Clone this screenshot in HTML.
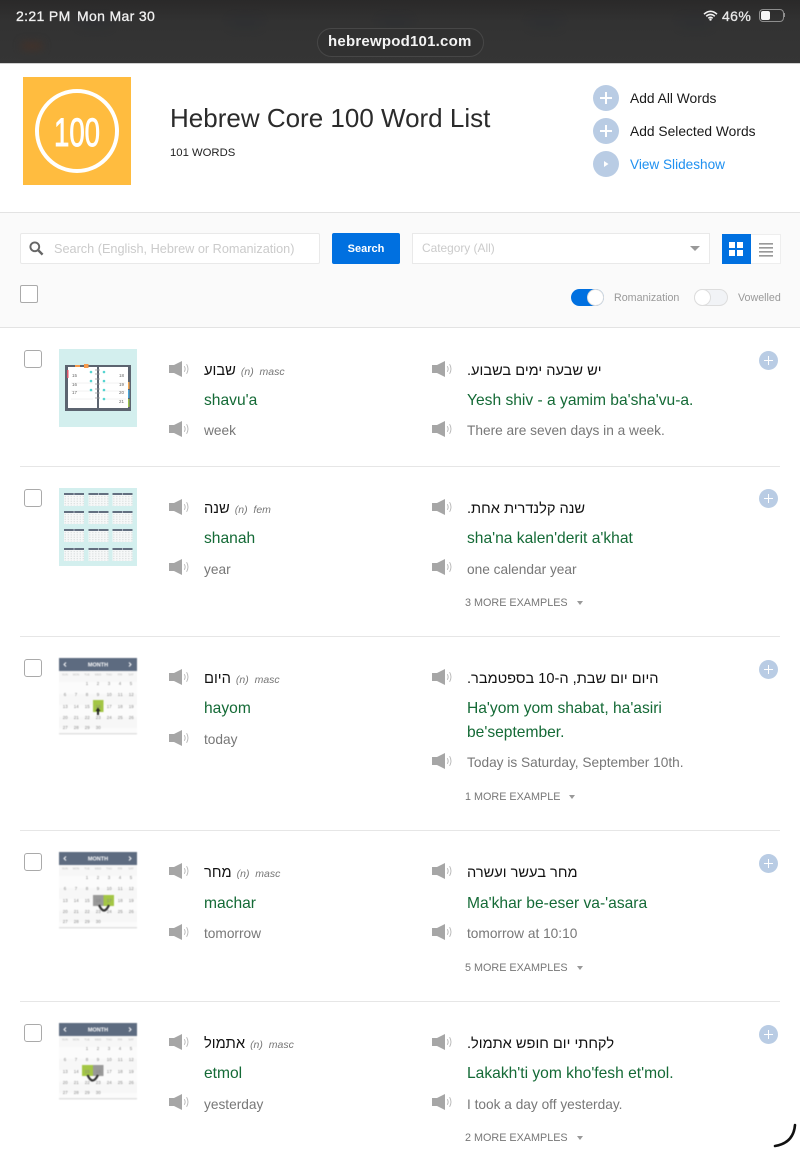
<!DOCTYPE html>
<html lang="en"><head><meta charset="utf-8"><title>Hebrew Core 100 Word List</title>
<style>
html,body{margin:0;padding:0;background:#fff}
body{width:800px;height:1151px;position:relative;overflow:hidden;font-family:"Liberation Sans","Noto Sans CJK JP",sans-serif}
.t{position:absolute;white-space:nowrap;line-height:20px}
.a{position:absolute}
svg{position:absolute;overflow:visible}
.he{color:#111;font-size:14.6px}
.hw{color:#111;font-size:14.7px}
.g{color:#146a36;font-size:15.6px}
.gw{color:#146a36;font-size:15.6px}
.e{color:#777;font-size:13.7px}
.m{color:#777;font-size:10.8px}
.pos{color:#777;font-size:10.5px;font-style:italic;margin-left:5px}
.cb{position:absolute;left:24px;width:15.5px;height:15.5px;border:1.5px solid #aaa;border-radius:3px;background:#fff}
.pl{position:absolute;left:759px;width:19px;height:19px;border-radius:50%;background:#b9cce4}
.pl:before{content:"";position:absolute;left:5px;top:9px;width:9px;height:1.4px;background:#fff}
.pl:after{content:"";position:absolute;left:8.8px;top:5.2px;width:1.4px;height:9px;background:#fff}
.tri{position:absolute;width:0;height:0;border-left:3.5px solid transparent;border-right:3.5px solid transparent;border-top:4px solid #999}
.hr{position:absolute;left:20px;width:760px;height:1px;background:#e6e6e6}
.sp{position:absolute;width:21px;height:17px}
.big{position:absolute;width:26px;height:26px;left:593px;border-radius:50%;background:#b9cce4}
.big.p:before{content:"";position:absolute;left:7px;top:12.2px;width:12px;height:1.6px;background:#fff}
.big.p:after{content:"";position:absolute;left:12.2px;top:7px;width:1.6px;height:12px;background:#fff}
</style></head><body>

<svg width="0" height="0" style="position:absolute"><defs>
<symbol id="spk" viewBox="0 0 21 17"><path d="M0 4H5L13 0V16L5 12H0Z" fill="#a6a6a6"/><path d="M15.3 5.2Q17 8 15.3 10.8M17.6 3.2Q20.4 8 17.6 12.8" fill="none" stroke="#b5b5b5" stroke-width=".9"/></symbol>
<pattern id="dots" width="3" height="2.4" patternUnits="userSpaceOnUse"><rect width="3" height="2.4" fill="#f6f8f8"/><rect x=".6" y=".6" width="1.4" height="1" fill="#d8dcdd"/></pattern>
<g id="mini"><rect width="20" height="13" fill="url(#dots)"/><rect width="20" height="2" fill="#636f80"/><rect x="9.5" width="1" height="2" fill="#a9b3bf"/></g>
</defs></svg>

<!-- top bar -->
<div class="a" style="left:0;top:0;width:800px;height:63px;background:linear-gradient(#2a2929,#323232 35%,#353535)"></div>
<div class="a" style="left:0;top:18px;width:800px;height:10px;filter:blur(5px);opacity:.3;background:repeating-linear-gradient(90deg,transparent 0 80px,#262c33 80px 110px,transparent 110px 150px)"></div>
<div class="a" style="left:22px;top:42px;width:20px;height:8px;background:#42322a;filter:blur(4px)"></div>
<div class="a" style="left:0;top:63px;width:800px;height:1px;background:#cfcfcf"></div>
<div class="t" style="left:16px;top:6px;color:#f1f1f1;font-size:14px;-webkit-text-stroke:.3px #f1f1f1;letter-spacing:.35px">2:21 PM</div>
<div class="t" style="left:77px;top:6px;color:#f1f1f1;font-size:14px;-webkit-text-stroke:.3px #f1f1f1;letter-spacing:.35px">Mon Mar 30</div>
<div class="a" style="left:317px;top:28px;width:165px;height:27px;border:1px solid #474747;border-radius:15px;background:#313131"></div>
<div class="t" style="left:328px;top:32px;color:#f4f4f4;font-size:15px;font-weight:700;letter-spacing:.22px">hebrewpod101.com</div>
<svg style="left:703px;top:10px" width="15" height="11" viewBox="0 0 15 11"><path d="M1 4.2Q7.5-1.6 14 4.2M3.2 6.3Q7.5 2.6 11.8 6.3M5.3 8.3Q7.5 6.4 9.7 8.3" fill="none" stroke="#f1f1f1" stroke-width="1.6"/><circle cx="7.5" cy="9.6" r="1.2" fill="#f1f1f1"/></svg>
<div class="t" style="left:722px;top:6px;color:#e8e8e8;font-size:14px;-webkit-text-stroke:.3px #e8e8e8;letter-spacing:.4px">46%</div>
<div class="a" style="left:759px;top:9px;width:23px;height:11px;border:1px solid #8e8e8e;border-radius:4px"></div>
<div class="a" style="left:761px;top:11px;width:9px;height:9px;background:#f5f5f5;border-radius:2px"></div>
<div class="a" style="left:784px;top:13px;width:1px;height:4px;background:#8e8e8e"></div>

<!-- header -->
<svg style="left:23px;top:77px" width="108" height="108" viewBox="0 0 108 108"><rect width="108" height="108" fill="#ffbc3f"/><circle cx="54" cy="54" r="40" fill="none" stroke="#fff" stroke-width="4"/><text x="31" y="69" font-family="Liberation Sans, sans-serif" font-size="40" fill="#fff" stroke="#fff" stroke-width=".9" textLength="46" lengthAdjust="spacingAndGlyphs">100</text></svg>
<div class="t" style="left:170px;top:103px;font-size:26px;line-height:30px;color:#2b2b2b">Hebrew Core 100 Word List</div>
<div class="t" style="left:170px;top:143px;font-size:11.3px;color:#222">101 WORDS</div>
<div class="big p" style="top:85px"></div>
<div class="big p" style="top:118px"></div>
<div class="big" style="top:151px"></div>
<svg style="left:604px;top:161px" width="5" height="6"><path d="M0 0L4.5 3L0 6Z" fill="#fff"/></svg>
<div class="t" style="left:630px;top:89px;font-size:13.8px;color:#1a1a1a">Add All Words</div>
<div class="t" style="left:630px;top:122px;font-size:13.8px;color:#1a1a1a">Add Selected Words</div>
<div class="t" style="left:630px;top:155px;font-size:13.6px;color:#1e90f0">View Slideshow</div>

<!-- toolbar -->
<div class="a" style="left:0;top:212px;width:800px;height:114px;background:#fafafa;border-top:1px solid #e3e3e3;border-bottom:1px solid #e3e3e3"></div>
<div class="a" style="left:20px;top:233px;width:298px;height:29px;background:#fff;border:1px solid #e9e9e9;border-radius:2px"></div>
<svg style="left:29px;top:241px" width="15" height="15" viewBox="0 0 15 15"><circle cx="5.8" cy="5.8" r="4.4" fill="none" stroke="#666" stroke-width="1.9"/><path d="M9 9L13.6 13.6" stroke="#666" stroke-width="2.4"/></svg>
<div class="t" style="left:54px;top:239px;font-size:12.7px;color:#cbcbcb">Search (English, Hebrew or Romanization)</div>
<div class="a" style="left:332px;top:233px;width:68px;height:31px;background:#0070e0;border-radius:2px;color:#fff;font-size:11px;font-weight:700;line-height:32px;text-align:center">Search</div>
<div class="a" style="left:412px;top:233px;width:296px;height:29px;background:#fff;border:1px solid #e9e9e9"></div>
<div class="t" style="left:422px;top:238px;font-size:11.9px;color:#cbcbcb">Category (All)</div>
<div class="tri" style="left:690px;top:246px;border-left-width:5px;border-right-width:5px;border-top-width:5px;border-top-color:#999"></div>
<div class="a" style="left:722px;top:234px;width:29px;height:30px;background:#0070e0"></div>
<div class="a" style="left:751px;top:234px;width:29px;height:28px;background:#fff;border:1px solid #eee;border-left:0"></div>
<svg style="left:729px;top:242px" width="15" height="14"><path d="M0 0h6v6H0zM8 0h6v6H8zM0 8h6v6H0zM8 8h6v6H8z" fill="#fff"/></svg>
<svg style="left:759px;top:243px" width="14" height="14"><path d="M0 0h14v1.6H0zM0 4h14v1.6H0zM0 8h14v1.6H0zM0 12h14v1.6H0z" fill="#999"/></svg>
<div class="a" style="left:20px;top:285px;width:16px;height:16px;border:1.5px solid #aaa;border-radius:2px;background:#fff"></div>
<div class="a" style="left:571px;top:289px;width:33px;height:17px;border-radius:9px;background:#0070e0"></div>
<div class="a" style="left:587px;top:289px;width:15px;height:15px;border-radius:50%;background:#fff;border:1px solid #ddd"></div>
<div class="t" style="left:614px;top:288px;font-size:10.7px;color:#999">Romanization</div>
<div class="a" style="left:694px;top:289px;width:32px;height:15px;border-radius:9px;background:#f1f3f6;border:1px solid #ddd"></div>
<div class="a" style="left:694px;top:289px;width:15px;height:15px;border-radius:50%;background:#fff;border:1px solid #ddd"></div>
<div class="t" style="left:738px;top:288px;font-size:10.7px;color:#999">Vowelled</div>

<!-- separators -->
<div class="hr" style="top:466px"></div>
<div class="hr" style="top:636px"></div>
<div class="hr" style="top:830px"></div>
<div class="hr" style="top:1001px"></div>

<!-- row 1 -->
<div class="cb" style="top:350px"></div>
<svg style="left:59px;top:349px;filter:blur(.3px)" width="78" height="78" viewBox="0 0 78 78">
<rect width="78" height="78" fill="#d3efee"/>
<rect x="6" y="16" width="66" height="46" fill="#5c6470"/><rect x="9" y="18" width="29" height="41" fill="#fff"/><rect x="40" y="18" width="29" height="41" fill="#fff"/>
<rect x="16" y="16" width="5" height="2" fill="#f79a4b"/><rect x="25" y="15" width="4.500" height="4" fill="#f79a4b"/>
<rect x="8" y="21" width="1.5" height="8" fill="#e0556a"/><rect x="69" y="33" width="1.5" height="7" fill="#f3a64f"/><rect x="69" y="41" width="1.5" height="8" fill="#4aa6d8"/><rect x="69" y="50" width="1.5" height="8" fill="#9bc24a"/>
<path d="M36 21h5M36 25h5M36 30h5M36 35h5M36 40h5M36 44h5M36 49h5" stroke="#999" stroke-width=".7"/>
<path d="M12 34h22M12 42h22M12 50h22M43 34h24M43 42h24M43 50h24" stroke="#e6e6e6" stroke-width=".5"/>
<g fill="#55d4d0"><circle cx="32" cy="23" r="1.3"/><circle cx="32" cy="32" r="1.3"/><circle cx="32" cy="41" r="1.3"/><circle cx="45" cy="23" r="1.3"/><circle cx="45" cy="32" r="1.3"/><circle cx="45" cy="41" r="1.3"/><circle cx="45" cy="50" r="1.3"/></g>
<g font-family="Liberation Sans,sans-serif" font-size="4.5" fill="#666"><text x="13" y="28">15</text><text x="13" y="37">16</text><text x="13" y="45">17</text><text x="60" y="28">18</text><text x="60" y="37">19</text><text x="60" y="45">20</text><text x="60" y="54">21</text></g>
</svg>
<svg class="sp" style="left:169px;top:361px"><use href="#spk"/></svg>
<div class="t" style="left:204px;top:361px"><span class="hw" dir="rtl">שבוע</span><span class="pos">(n)&nbsp; masc</span></div>
<div class="t g" style="left:204px;top:391px">shavu'a</div>
<svg class="sp" style="left:169px;top:421px"><use href="#spk"/></svg>
<div class="t e" style="left:204px;top:421px">week</div>
<svg class="sp" style="left:432px;top:361px"><use href="#spk"/></svg>
<div class="t he" dir="rtl" style="left:467px;top:361px">יש שבעה ימים בשבוע.</div>
<div class="t gw" style="left:467px;top:391px">Yesh shiv - a yamim ba'sha'vu-a.</div>
<svg class="sp" style="left:432px;top:421px"><use href="#spk"/></svg>
<div class="t e" style="left:467px;top:421px">There are seven days in a week.</div>
<div class="pl" style="top:351px"></div>

<!-- row 2 -->
<div class="cb" style="top:489px"></div>
<svg style="left:59px;top:488px;filter:blur(.3px)" width="78" height="78" viewBox="0 0 78 78">
<rect width="78" height="78" fill="#d3efee"/>
<use href="#mini" x="5" y="5"/><use href="#mini" x="29.5" y="5"/><use href="#mini" x="53.5" y="5"/>
<use href="#mini" x="5" y="23"/><use href="#mini" x="29.5" y="23"/><use href="#mini" x="53.5" y="23"/>
<use href="#mini" x="5" y="41"/><use href="#mini" x="29.5" y="41"/><use href="#mini" x="53.5" y="41"/>
<use href="#mini" x="5" y="60"/><use href="#mini" x="29.5" y="60"/><use href="#mini" x="53.5" y="60"/>
</svg>
<svg class="sp" style="left:169px;top:499px"><use href="#spk"/></svg>
<div class="t" style="left:204px;top:499px"><span class="hw" dir="rtl">שנה</span><span class="pos">(n)&nbsp; fem</span></div>
<div class="t g" style="left:204px;top:529px">shanah</div>
<svg class="sp" style="left:169px;top:559px"><use href="#spk"/></svg>
<div class="t e" style="left:204px;top:560px">year</div>
<svg class="sp" style="left:432px;top:499px"><use href="#spk"/></svg>
<div class="t he" dir="rtl" style="left:467px;top:499px">שנה קלנדרית אחת.</div>
<div class="t gw" style="left:467px;top:529px">sha'na kalen'derit a'khat</div>
<svg class="sp" style="left:432px;top:559px"><use href="#spk"/></svg>
<div class="t e" style="left:467px;top:560px">one calendar year</div>
<div class="t m" style="left:465px;top:593px">3 MORE EXAMPLES</div><div class="tri" style="left:577px;top:601px"></div>
<div class="pl" style="top:489px"></div>

<!-- row 3 -->
<div class="cb" style="top:659px"></div>
<svg style="left:59px;top:658px;filter:blur(.4px)" width="78" height="78" viewBox="0 0 78 78" font-family="Liberation Sans,sans-serif">
<rect width="78" height="76" fill="#fbfbfb"/><rect y="13" width="78" height="11" fill="#f7f7f7"/><rect y="36" width="78" height="11" fill="#f7f7f7"/><rect y="59" width="78" height="11" fill="#f7f7f7"/>
<rect width="78" height="13" fill="#5d6b80"/><rect y="75" width="78" height="1.5" fill="#e2e2e2"/>
<text x="39" y="8.500" font-size="5.500" font-weight="700" fill="#fff" text-anchor="middle">MONTH</text>
<path d="M7 4.500L5 6.500L7 8.500M70 4.500L72 6.500L70 8.500" fill="none" stroke="#fff" stroke-width="1"/>
<g font-size="2.800" fill="#bbb" text-anchor="middle"><text x="6" y="17.500">SUN</text><text x="17" y="17.500">MON</text><text x="28" y="17.500">TUE</text><text x="39" y="17.500">WED</text><text x="50" y="17.500">THU</text><text x="61" y="17.500">FRI</text><text x="72" y="17.500">SAT</text></g>
<rect x="34" y="42" width="10.500" height="12" fill="#a3c644"/>
<g font-size="4.400" fill="#888" text-anchor="middle"><text x="28 39 50 61 72" y="27">12345</text><text x="6 17 28 39 49 51.500 60 62.500 71 73.500" y="38">6789101112</text><text x="5 7.500 16 18.500 27 29.500 38 40.500 49 51.500 60 62.500 71 73.500" y="50">13141516171819</text><text x="5 7.500 16 18.500 27 29.500 38 40.500 49 51.500 60 62.500 71 73.500" y="61">20212223242526</text><text x="5 7.500 16 18.500 27 29.500 38 40.500" y="71">27282930</text></g>
<path d="M39 52V57" stroke="#222" stroke-width="2"/><path d="M36.500 53L39 49.500L41.500 53Z" fill="#222"/>
</svg>
<svg class="sp" style="left:169px;top:669px"><use href="#spk"/></svg>
<div class="t" style="left:204px;top:669px"><span class="hw" dir="rtl">היום</span><span class="pos">(n)&nbsp; masc</span></div>
<div class="t g" style="left:204px;top:699px">hayom</div>
<svg class="sp" style="left:169px;top:730px"><use href="#spk"/></svg>
<div class="t e" style="left:204px;top:730px">today</div>
<svg class="sp" style="left:432px;top:669px"><use href="#spk"/></svg>
<div class="t he" dir="rtl" style="left:467px;top:669px">היום יום שבת, ה-10 בספטמבר.</div>
<div class="t gw" style="left:467px;top:699px">Ha'yom yom shabat, ha'asiri</div>
<div class="t gw" style="left:467px;top:723px">be'september.</div>
<svg class="sp" style="left:432px;top:753px"><use href="#spk"/></svg>
<div class="t e" style="left:467px;top:753px">Today is Saturday, September 10th.</div>
<div class="t m" style="left:465px;top:787px">1 MORE EXAMPLE</div><div class="tri" style="left:569px;top:795px"></div>
<div class="pl" style="top:660px"></div>

<!-- row 4 -->
<div class="cb" style="top:853px"></div>
<svg style="left:59px;top:852px;filter:blur(.4px)" width="78" height="78" viewBox="0 0 78 78" font-family="Liberation Sans,sans-serif">
<rect width="78" height="76" fill="#fbfbfb"/><rect y="13" width="78" height="11" fill="#f7f7f7"/><rect y="36" width="78" height="11" fill="#f7f7f7"/><rect y="59" width="78" height="11" fill="#f7f7f7"/>
<rect width="78" height="13" fill="#5d6b80"/><rect y="75" width="78" height="1.5" fill="#e2e2e2"/>
<text x="39" y="8.500" font-size="5.500" font-weight="700" fill="#fff" text-anchor="middle">MONTH</text>
<path d="M7 4.500L5 6.500L7 8.500M70 4.500L72 6.500L70 8.500" fill="none" stroke="#fff" stroke-width="1"/>
<g font-size="2.800" fill="#bbb" text-anchor="middle"><text x="6" y="17.500">SUN</text><text x="17" y="17.500">MON</text><text x="28" y="17.500">TUE</text><text x="39" y="17.500">WED</text><text x="50" y="17.500">THU</text><text x="61" y="17.500">FRI</text><text x="72" y="17.500">SAT</text></g>
<rect x="34" y="43" width="10.500" height="11" fill="#999"/><rect x="44.500" y="43" width="10.500" height="11" fill="#a3c644"/>
<g font-size="4.400" fill="#888" text-anchor="middle"><text x="28 39 50 61 72" y="27">12345</text><text x="6 17 28 39 49 51.500 60 62.500 71 73.500" y="38">6789101112</text><text x="5 7.500 16 18.500 27 29.500 38 40.500 49 51.500 60 62.500 71 73.500" y="50">13141516171819</text><text x="5 7.500 16 18.500 27 29.500 38 40.500 49 51.500 60 62.500 71 73.500" y="61">20212223242526</text><text x="5 7.500 16 18.500 27 29.500 38 40.500" y="71">27282930</text></g>
<path d="M40 53Q45 64 50 53" fill="none" stroke="#333" stroke-width="2.200"/>
</svg>
<svg class="sp" style="left:169px;top:863px"><use href="#spk"/></svg>
<div class="t" style="left:204px;top:863px"><span class="hw" dir="rtl">מחר</span><span class="pos">(n)&nbsp; masc</span></div>
<div class="t g" style="left:204px;top:894px">machar</div>
<svg class="sp" style="left:169px;top:924px"><use href="#spk"/></svg>
<div class="t e" style="left:204px;top:924px">tomorrow</div>
<svg class="sp" style="left:432px;top:863px"><use href="#spk"/></svg>
<div class="t he" dir="rtl" style="left:467px;top:863px">מחר בעשר ועשרה</div>
<div class="t gw" style="left:467px;top:894px">Ma'khar be-eser va-'asara</div>
<svg class="sp" style="left:432px;top:924px"><use href="#spk"/></svg>
<div class="t e" style="left:467px;top:924px">tomorrow at 10:10</div>
<div class="t m" style="left:465px;top:958px">5 MORE EXAMPLES</div><div class="tri" style="left:577px;top:966px"></div>
<div class="pl" style="top:854px"></div>

<!-- row 5 -->
<div class="cb" style="top:1024px"></div>
<svg style="left:59px;top:1023px;filter:blur(.4px)" width="78" height="78" viewBox="0 0 78 78" font-family="Liberation Sans,sans-serif">
<rect width="78" height="76" fill="#fbfbfb"/><rect y="13" width="78" height="11" fill="#f7f7f7"/><rect y="36" width="78" height="11" fill="#f7f7f7"/><rect y="59" width="78" height="11" fill="#f7f7f7"/>
<rect width="78" height="13" fill="#5d6b80"/><rect y="75" width="78" height="1.5" fill="#e2e2e2"/>
<text x="39" y="8.500" font-size="5.500" font-weight="700" fill="#fff" text-anchor="middle">MONTH</text>
<path d="M7 4.500L5 6.500L7 8.500M70 4.500L72 6.500L70 8.500" fill="none" stroke="#fff" stroke-width="1"/>
<g font-size="2.800" fill="#bbb" text-anchor="middle"><text x="6" y="17.500">SUN</text><text x="17" y="17.500">MON</text><text x="28" y="17.500">TUE</text><text x="39" y="17.500">WED</text><text x="50" y="17.500">THU</text><text x="61" y="17.500">FRI</text><text x="72" y="17.500">SAT</text></g>
<rect x="23" y="42" width="11" height="11" fill="#a3c644"/><rect x="34" y="42" width="10.500" height="11" fill="#999"/>
<g font-size="4.400" fill="#888" text-anchor="middle"><text x="28 39 50 61 72" y="27">12345</text><text x="6 17 28 39 49 51.500 60 62.500 71 73.500" y="38">6789101112</text><text x="5 7.500 16 18.500 27 29.500 38 40.500 49 51.500 60 62.500 71 73.500" y="50">13141516171819</text><text x="5 7.500 16 18.500 27 29.500 38 40.500 49 51.500 60 62.500 71 73.500" y="61">20212223242526</text><text x="5 7.500 16 18.500 27 29.500 38 40.500" y="71">27282930</text></g>
<path d="M28.500 52Q33.500 63 39 52" fill="none" stroke="#333" stroke-width="2.200"/>
</svg>
<svg class="sp" style="left:169px;top:1034px"><use href="#spk"/></svg>
<div class="t" style="left:204px;top:1034px"><span class="hw" dir="rtl">אתמול</span><span class="pos">(n)&nbsp; masc</span></div>
<div class="t g" style="left:204px;top:1064px">etmol</div>
<svg class="sp" style="left:169px;top:1094px"><use href="#spk"/></svg>
<div class="t e" style="left:204px;top:1095px">yesterday</div>
<svg class="sp" style="left:432px;top:1034px"><use href="#spk"/></svg>
<div class="t he" dir="rtl" style="left:467px;top:1034px">לקחתי יום חופש אתמול.</div>
<div class="t gw" style="left:467px;top:1064px">Lakakh'ti yom kho'fesh et'mol.</div>
<svg class="sp" style="left:432px;top:1094px"><use href="#spk"/></svg>
<div class="t e" style="left:467px;top:1095px">I took a day off yesterday.</div>
<div class="t m" style="left:465px;top:1128px">2 MORE EXAMPLES</div><div class="tri" style="left:577px;top:1136px"></div>
<div class="pl" style="top:1025px"></div>

<svg style="left:770px;top:1120px" width="30" height="31"><path d="M25 5Q23.500 23 5 26" fill="none" stroke="#111" stroke-width="2.600" stroke-linecap="round"/></svg>
</body></html>
